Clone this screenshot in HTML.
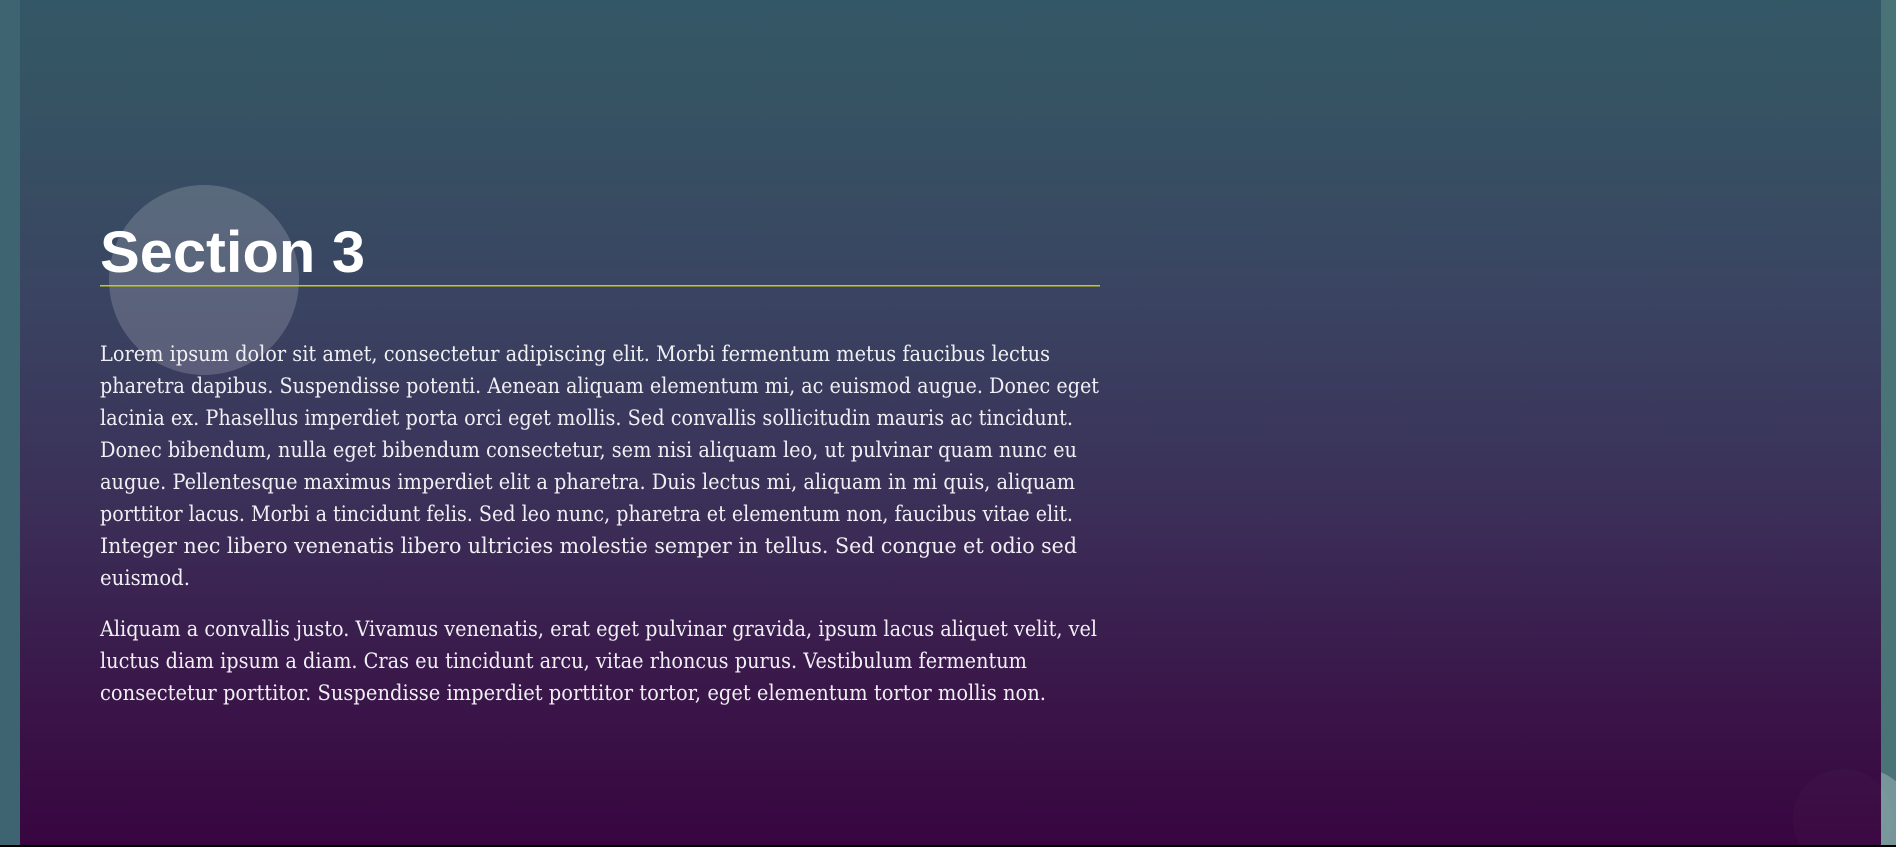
<!DOCTYPE html>
<html><head><meta charset="utf-8"><style>
html,body{margin:0;padding:0;width:1896px;height:847px;overflow:hidden;}
body{position:relative;background:#3d6470;}
.panel{position:absolute;left:20px;top:0;width:1861px;height:845px;background:linear-gradient(180deg,#345766 0%,#355463 10%,#3a4462 35%,#3b2f58 60%,#3a1649 82%,#380540 100%);overflow:hidden;}
.right{position:absolute;left:1881px;top:0;width:15px;height:845px;background:#4a7377;overflow:hidden;}
.bottom{position:absolute;left:0;top:845px;width:1896px;height:2px;background:#000;}
</style></head><body>
<div class="panel"></div>
<div class="right"><div style="position:absolute;left:-68px;top:769px;width:100px;height:100px;border-radius:50%;background:rgba(255,255,255,0.25)"></div></div>
<div style="position:absolute;left:1793px;top:769px;width:100px;height:100px;border-radius:50%;background:rgba(255,255,255,0.02)"></div>
<div class="bottom"></div>
<div style="position:absolute;left:109px;top:185px;width:190px;height:190px;border-radius:50%;background:rgba(255,255,255,0.17)"></div>
<svg width="1896" height="847" style="position:absolute;left:0;top:0">
<text x="100" y="272" font-family="Liberation Sans, Arial, sans-serif" font-weight="bold" font-size="58" fill="#fff" textLength="265" lengthAdjust="spacingAndGlyphs">Section 3</text>
<rect x="100" y="285" width="1000" height="1.5" fill="#c9cc00"/>
<g font-family="DejaVu Serif, Liberation Serif, serif" font-size="21.5" fill="#f0f0f4">
<text x="100" y="361" textLength="950" lengthAdjust="spacingAndGlyphs">Lorem ipsum dolor sit amet, consectetur adipiscing elit. Morbi fermentum metus faucibus lectus</text>
<text x="100" y="393" textLength="999" lengthAdjust="spacingAndGlyphs">pharetra dapibus. Suspendisse potenti. Aenean aliquam elementum mi, ac euismod augue. Donec eget</text>
<text x="100" y="425" textLength="973" lengthAdjust="spacingAndGlyphs">lacinia ex. Phasellus imperdiet porta orci eget mollis. Sed convallis sollicitudin mauris ac tincidunt.</text>
<text x="100" y="457" textLength="977" lengthAdjust="spacingAndGlyphs">Donec bibendum, nulla eget bibendum consectetur, sem nisi aliquam leo, ut pulvinar quam nunc eu</text>
<text x="100" y="489" textLength="975" lengthAdjust="spacingAndGlyphs">augue. Pellentesque maximus imperdiet elit a pharetra. Duis lectus mi, aliquam in mi quis, aliquam</text>
<text x="100" y="521" textLength="973" lengthAdjust="spacingAndGlyphs">porttitor lacus. Morbi a tincidunt felis. Sed leo nunc, pharetra et elementum non, faucibus vitae elit.</text>
<text x="100" y="553" textLength="977" lengthAdjust="spacingAndGlyphs">Integer nec libero venenatis libero ultricies molestie semper in tellus. Sed congue et odio sed</text>
<text x="100" y="585" textLength="90" lengthAdjust="spacingAndGlyphs">euismod.</text>
<text x="100" y="636" textLength="997" lengthAdjust="spacingAndGlyphs">Aliquam a convallis justo. Vivamus venenatis, erat eget pulvinar gravida, ipsum lacus aliquet velit, vel</text>
<text x="100" y="668" textLength="927" lengthAdjust="spacingAndGlyphs">luctus diam ipsum a diam. Cras eu tincidunt arcu, vitae rhoncus purus. Vestibulum fermentum</text>
<text x="100" y="700" textLength="946" lengthAdjust="spacingAndGlyphs">consectetur porttitor. Suspendisse imperdiet porttitor tortor, eget elementum tortor mollis non.</text>
</g>
</svg>
</body></html>
